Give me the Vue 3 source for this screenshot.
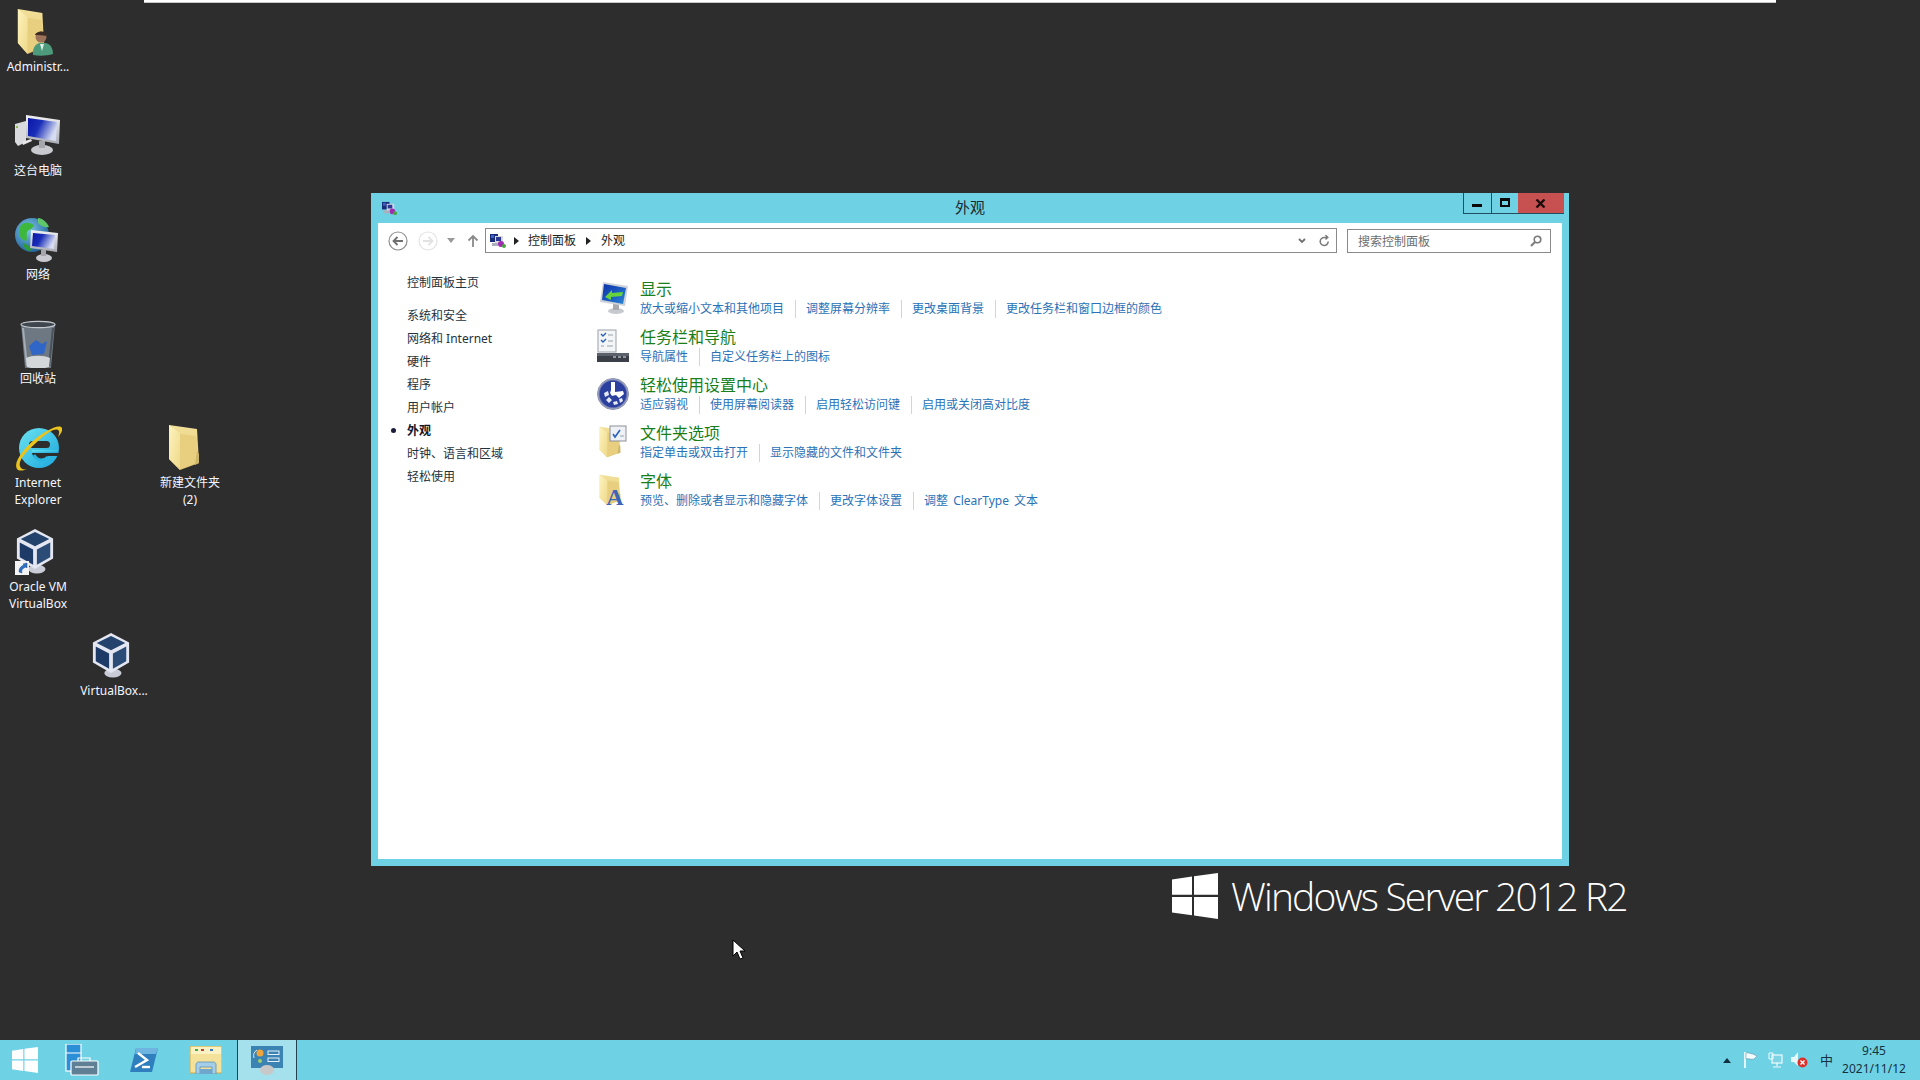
<script setup>
const desktopItems = [
  { id: 'admin', left: 0, top: 8, icon: 'i-admin', lines: ['Administr...'] },
  { id: 'pc', left: 0, top: 112, icon: 'i-pc', lines: ['这台电脑'] },
  { id: 'net', left: 0, top: 216, icon: 'i-net', lines: ['网络'] },
  { id: 'bin', left: 0, top: 320, icon: 'i-bin', lines: ['回收站'] },
  { id: 'ie', left: 0, top: 424, icon: 'i-ie', lines: ['Internet', 'Explorer'] },
  { id: 'folder', left: 152, top: 424, icon: 'i-newfolder', lines: ['新建文件夹', '(2)'] },
  { id: 'vbox', left: 0, top: 528, icon: 'i-vbox-short', lines: ['Oracle VM', 'VirtualBox'] },
  { id: 'vbox2', left: 76, top: 632, icon: 'i-vbox', lines: ['VirtualBox...'] }
]
const navItems = ['系统和安全', '网络和 Internet', '硬件', '程序', '用户帐户', '外观', '时钟、语言和区域', '轻松使用']
const sections = [
  { title: '显示', icon: 'c-display', links: ['放大或缩小文本和其他项目', '调整屏幕分辨率', '更改桌面背景', '更改任务栏和窗口边框的颜色'] },
  { title: '任务栏和导航', icon: 'c-taskbar', links: ['导航属性', '自定义任务栏上的图标'] },
  { title: '轻松使用设置中心', icon: 'c-ease', links: ['适应弱视', '使用屏幕阅读器', '启用轻松访问键', '启用或关闭高对比度'] },
  { title: '文件夹选项', icon: 'c-options', links: ['指定单击或双击打开', '显示隐藏的文件和文件夹'] },
  { title: '字体', icon: 'c-fonts', links: ['预览、删除或者显示和隐藏字体', '更改字体设置', '调整 ClearType 文本'] }
]
</script>

<template>
  <div class="screen">
    <svg class="defs" width="0" height="0" aria-hidden="true">
      <defs>
        <linearGradient id="gBack" x1="0" y1="0" x2="0" y2="1"><stop offset="0" stop-color="#f3e09a"/><stop offset="1" stop-color="#e2c56e"/></linearGradient>
        <linearGradient id="gFlap" x1="0" y1="0" x2="1" y2="1"><stop offset="0" stop-color="#fdf3bd"/><stop offset="1" stop-color="#efd98a"/></linearGradient>
        <linearGradient id="gScreen" x1="0" y1="0" x2="1" y2="0.4"><stop offset="0" stop-color="#0a14a8"/><stop offset=".45" stop-color="#1a2fb8"/><stop offset="1" stop-color="#d6dcf2"/></linearGradient>
        <linearGradient id="gSilver" x1="0" y1="0" x2="0" y2="1"><stop offset="0" stop-color="#f2f2f4"/><stop offset="1" stop-color="#a9acb4"/></linearGradient>
        <linearGradient id="gIe" x1="0" y1="0" x2="1" y2="1"><stop offset="0" stop-color="#6be4f2"/><stop offset="1" stop-color="#1ba6dc"/></linearGradient>
        <linearGradient id="gDisp" x1="0" y1="0" x2="1" y2="1"><stop offset="0" stop-color="#0c2fa8"/><stop offset="1" stop-color="#2a86d8"/></linearGradient>
        <radialGradient id="gGlobe" cx=".4" cy=".35" r=".7"><stop offset="0" stop-color="#7fc6e8"/><stop offset="1" stop-color="#1c5f98"/></radialGradient>
        <radialGradient id="gEase" cx=".5" cy=".5" r=".5"><stop offset="0" stop-color="#2e4ab4"/><stop offset=".8" stop-color="#1c2f8c"/><stop offset="1" stop-color="#c8cde0"/></radialGradient>
      </defs>
      <symbol id="s-folder" viewBox="0 0 32 47" preserveAspectRatio="none">
        <polygon points="1,1 29,5 31,39 12,46 1,35" fill="url(#gBack)"/>
        <polygon points="12,10 28,12 30,38 12,45" fill="#e8cf7f"/>
        <polygon points="29,27 31,30 31,39 27,41" fill="#cdb56a"/>
        <polygon points="1,1 12,9 12,46 1,35" fill="url(#gFlap)"/>
      </symbol>
      <symbol id="s-win" viewBox="0 0 46 46">
        <polygon points="0,6.5 20,3.6 20,21.8 0,21.8" fill="#fff"/>
        <polygon points="22,3.3 46,0 46,21.8 22,21.8" fill="#fff"/>
        <polygon points="0,24 20,24 20,42.3 0,39.5" fill="#fff"/>
        <polygon points="22,24 46,24 46,46 22,42.6" fill="#fff"/>
      </symbol>
      <symbol id="s-cube" viewBox="0 0 42 48">
        <ellipse cx="23" cy="43" rx="9" ry="4.5" fill="#c9ccd6"/>
        <polygon points="21,1 40,11 40,32 21,43 2,32 2,11" fill="#e4e7f2"/>
        <polygon points="21,4 36,11.500 21,19 6,11.500" fill="#23426c"/>
        <polygon points="5,15 19,22.500 19,38.500 5,30.500" fill="#1e3a66"/>
        <polygon points="23,22.500 37,15 37,30.500 23,38.500" fill="#2c4c78"/>
      </symbol>
      <symbol id="s-cpsmall" viewBox="0 0 16 16">
        <rect x="0" y="1" width="8" height="8" fill="#1b2d7a"/>
        <rect x="1" y="2" width="3" height="3" fill="#3f62c8"/>
        <rect x="5" y="3" width="8" height="9" fill="#d8d8e4"/>
        <rect x="6" y="4" width="5" height="4" fill="#2c3a92"/>
        <circle cx="11" cy="11" r="3" fill="#a02cb0"/>
        <circle cx="14" cy="13" r="2" fill="#46a83a"/>
        <rect x="2" y="10" width="6" height="3" fill="#aab0bc"/>
      </symbol>
      <symbol id="i-admin" viewBox="0 0 48 48">
        <use href="#s-folder" x="3" y="0" width="28" height="47"/>
        <path d="M19 47c-1-7 3-12 7-12h5c5 0 8 5 8 11-6 2-14 2-20 1z" fill="#4e9a7c"/>
        <circle cx="27" cy="29" r="5.500" fill="#9c7258"/>
        <path d="M21 27c1-4 10-5 12-1l-1 2c-3-1-7-1-11-1z" fill="#3a2c24"/>
        <path d="M26 36l2 7 2-7z" fill="#e0f0e6"/>
      </symbol>
      <symbol id="i-pc" viewBox="0 0 48 48">
        <polygon points="1,12 12,9 12,30 4,34 1,30" fill="#d8dade"/>
        <rect x="2" y="14" width="2" height="2" fill="#8dbb4e"/>
        <polygon points="12,3 46,8 45,32 12,26" fill="url(#gSilver)"/>
        <polygon points="14,6 43,10 42,29 14,24" fill="url(#gScreen)"/>
        <ellipse cx="28" cy="38" rx="11" ry="5" fill="#c8cad0"/>
        <rect x="25" y="29" width="6" height="7" fill="#a5a7ad"/>
        <polygon points="8,30 17,27 18,29 9,33" fill="#e8e8e8"/>
      </symbol>
      <symbol id="i-net" viewBox="0 0 48 48">
        <circle cx="18" cy="19" r="17" fill="url(#gGlobe)"/>
        <path d="M7 9c5-4 10-2 13 0-1 4-5 4-7 7-1 3 1 6-1 9-3 0-7-4-7-9 0-2 1-5 2-7z" fill="#3eb83c"/>
        <path d="M24 2c4 0 9 4 11 9-4 1-8-1-11-4z" fill="#5fc76a"/>
        <path d="M9 27c3 0 6 3 9 7l-3 1c-3-1-6-4-6-8z" fill="#2f9a3a"/>
        <polygon points="17,14 44,17 43,36 16,32" fill="url(#gSilver)"/>
        <polygon points="19,17 41,19 40,33 18,30" fill="url(#gScreen)"/>
        <ellipse cx="30" cy="42" rx="8" ry="4" fill="#c8cad0"/>
        <rect x="27" y="34" width="5" height="6" fill="#a5a7ad"/>
      </symbol>
      <symbol id="i-bin" viewBox="0 0 48 48">
        <path d="M7 4c4-3 30-3 34 0l-4 44c-6 2-20 2-26 0z" fill="#6d7882"/>
        <ellipse cx="24" cy="4.500" rx="17" ry="3.200" fill="#3f464e" stroke="#c4cad0" stroke-width="1.200"/>
        <path d="M9 8l4 38" stroke="#a3abb3" stroke-width="2"/>
        <path d="M39 8l-4 38" stroke="#4a525a" stroke-width="2"/>
        <path d="M15 26l7-6 6 4 5-3-3 13-12 1z" fill="#2f66c8"/>
        <path d="M12 38c6-3 18-3 24 0l-1 9c-6 2-16 2-22 0z" fill="#d4d7da"/>
      </symbol>
      <symbol id="i-ie" viewBox="0 0 48 48">
        <circle cx="25" cy="24" r="20" fill="url(#gIe)"/>
        <rect x="15" y="17" width="21" height="7" rx="3.500" fill="#2d2d2d"/>
        <path d="M46 29H18c1 4 4 7 8 7 3 0 6-1 8-4h12z" fill="#2d2d2d"/>
        <path d="M18 29h26v-3H18z" fill="url(#gIe)"/>
        <path d="M20 31c2 3 4 5 7 5 3 0 5-1 7-3" fill="none" stroke="#27b6e2" stroke-width="3"/>
        <path d="M3 45c-5-8 13-29 30-38 7-4 13-6 15-3 1 2-1 6-4 9 1-3 2-6 0-7-3-2-12 3-21 12C12 28 2 38 7 44c1 1 3 2 6 1-5 2-8 2-10 0z" fill="#ecc21c"/>
      </symbol>
      <symbol id="i-newfolder" viewBox="0 0 48 48">
        <use href="#s-folder" x="2" y="0" width="32" height="47"/>
      </symbol>
      <symbol id="i-vbox" viewBox="0 0 48 48">
        <use href="#s-cube" x="1" y="0" width="40" height="46"/>
      </symbol>
      <symbol id="i-vbox-short" viewBox="0 0 48 48">
        <use href="#s-cube" x="1" y="0" width="40" height="46"/>
        <rect x="1" y="33" width="14" height="14" fill="#f4f4f4"/>
        <path d="M5 44c0-4 2-6 5-7l-1-1 4-1v5l-1-1c-3 1-5 3-4 6z" fill="#2f6fc0" stroke="#1e4f96" stroke-width=".500"/>
      </symbol>
      <symbol id="c-display" viewBox="0 0 32 36">
        <ellipse cx="19" cy="31" rx="8" ry="3" fill="#c7c9ce"/>
        <rect x="16" y="24" width="6" height="6" fill="#a8aab0"/>
        <polygon points="6,2 31,6 28,26 3,22" fill="#cfd2d8"/>
        <polygon points="7,4 29,8 26,24 5,20" fill="url(#gDisp)"/>
        <path d="M8 17l7-7 0 3 11-1-1 4-11 1 0 3z" fill="#66d23c"/>
      </symbol>
      <symbol id="c-taskbar" viewBox="0 0 32 36">
        <rect x="1" y="2" width="18" height="22" fill="#f3f5f7" stroke="#9aa2aa"/>
        <path d="M4 6l2 2 3-3M4 12l2 2 3-3" fill="none" stroke="#2a62b0" stroke-width="1.400"/>
        <path d="M11 7h5M11 13h5M4 18h3M10 18h6" stroke="#9aa2aa"/>
        <rect x="0" y="25" width="32" height="9" fill="#3a3f48"/>
        <rect x="0" y="25" width="32" height="3" fill="#5c626c"/>
        <path d="M16 29h3M21 29h3M26 29h3" stroke="#aeb4bc" stroke-width="1.600"/>
      </symbol>
      <symbol id="c-ease" viewBox="0 0 32 36">
        <circle cx="16" cy="18" r="15.500" fill="url(#gEase)" stroke="#8b90a8"/>
        <circle cx="16" cy="18" r="13" fill="#2b3f9e"/>
        <path d="M14 6h4v10l8-1 1 3-5 4-3-3-4 1-2-3 1-3z" fill="#fff"/>
        <path d="M7 17l4-2 1 4-4 2zM9 24l3-3 3 3-3 3zM16 26l4-1 1 3-4 1zM22 23l3-1 1 3-3 2z" fill="#e6eaf6"/>
      </symbol>
      <symbol id="c-options" viewBox="0 0 32 36">
        <use href="#s-folder" x="2" y="2" width="22" height="32"/>
        <rect x="13" y="2" width="16" height="15" fill="#eef1f6" stroke="#8b8f96"/>
        <path d="M16 10l2 3 5-7" fill="none" stroke="#2a62c0" stroke-width="1.600"/>
        <path d="M23 12h4" stroke="#9aa0aa"/>
      </symbol>
      <symbol id="c-fonts" viewBox="0 0 32 36">
        <use href="#s-folder" x="2" y="2" width="22" height="32"/>
      </symbol>
    </svg>

    <main class="desktop">
      <div class="session-bar"></div>

      <div
        v-for="item in desktopItems"
        :key="item.id"
        class="desk-item"
        :style="{ left: item.left + 'px', top: item.top + 'px' }"
      >
        <svg class="desk-icon" viewBox="0 0 48 48"><use :href="'#' + item.icon"/></svg>
        <div class="desk-label">
          <div v-for="line in item.lines" :key="line">{{ line }}</div>
        </div>
      </div>

      <section class="window">
        <header class="titlebar">
          <svg class="title-icon"><use href="#s-cpsmall"/></svg>
          <div class="title-text">外观</div>
          <div class="win-buttons">
            <div class="win-btn win-min"><span class="min-glyph"></span></div>
            <div class="win-btn win-max"><span class="max-glyph"></span></div>
            <div class="win-btn win-close">
              <svg width="11" height="9" viewBox="0 0 11 9"><path d="M1.500 0.500l8 8M9.500 0.500l-8 8" stroke="#1a0d0d" stroke-width="2.400"/></svg>
            </div>
          </div>
        </header>

        <div class="win-body">
          <div class="toolbar">
            <svg class="tb-back" width="20" height="20" viewBox="0 0 20 20">
              <circle cx="10" cy="10" r="9" fill="#fff" stroke="#8f8f8f" stroke-width="1.200"/>
              <path d="M15 10H6M9.500 6l-4 4 4 4" fill="none" stroke="#6f6f6f" stroke-width="1.800"/>
            </svg>
            <svg class="tb-forward" width="20" height="20" viewBox="0 0 20 20">
              <circle cx="10" cy="10" r="9" fill="#fff" stroke="#e4e4e4" stroke-width="1.200"/>
              <path d="M5 10h9M10.500 6l4 4-4 4" fill="none" stroke="#e2e2e2" stroke-width="1.800"/>
            </svg>
            <svg class="tb-drop" width="8" height="5" viewBox="0 0 8 5"><path d="M0 0h8L4 5z" fill="#9a9a9a"/></svg>
            <svg class="tb-up" width="14" height="14" viewBox="0 0 14 14"><path d="M7 13V2M2.500 6.500L7 2l4.500 4.500" fill="none" stroke="#8a8a8a" stroke-width="1.800"/></svg>

            <div class="address">
              <svg class="addr-icon"><use href="#s-cpsmall"/></svg>
              <svg class="crumb-arrow" width="5" height="8" viewBox="0 0 5 8"><path d="M0 0l5 4-5 4z" fill="#222"/></svg>
              <span class="crumb">控制面板</span>
              <svg class="crumb-arrow second" width="5" height="8" viewBox="0 0 5 8"><path d="M0 0l5 4-5 4z" fill="#222"/></svg>
              <span class="crumb second">外观</span>
              <svg class="addr-chev" width="8" height="6" viewBox="0 0 8 6"><path d="M1 1l3 3 3-3" fill="none" stroke="#707070" stroke-width="1.800"/></svg>
              <svg class="addr-refresh" width="11" height="12" viewBox="0 0 11 12"><path d="M9.200 6.500A4 4 0 1 1 5.500 2.500H8M6.500 0l2.300 2.500-2.300 2" fill="none" stroke="#7a7a7a" stroke-width="1.500"/></svg>
            </div>

            <div class="search">
              <span class="search-text">搜索控制面板</span>
              <svg width="12" height="12" viewBox="0 0 12 12"><circle cx="7.500" cy="4.500" r="3.300" fill="none" stroke="#7a7a7a" stroke-width="1.600"/><path d="M5 7l-4 4" stroke="#7a7a7a" stroke-width="2"/></svg>
            </div>
          </div>

          <div class="content">
            <nav class="sidebar">
              <div class="nav-home">控制面板主页</div>
              <div
                v-for="n in navItems"
                :key="n"
                class="nav-item"
                :class="{ current: n === '外观' }"
              >{{ n }}</div>
            </nav>
            <div class="sections">
              <article v-for="s in sections" :key="s.title" class="section">
                <svg class="section-icon" viewBox="0 0 32 42">
                  <use :href="'#' + s.icon" width="32" height="36"/>
                  <text v-if="s.icon === 'c-fonts'" x="18" y="33" text-anchor="middle" class="font-a">A</text>
                </svg>
                <div>
                  <h2 class="section-title">{{ s.title }}</h2>
                  <div class="links">
                    <span v-for="l in s.links" :key="l" class="link">{{ l }}</span>
                  </div>
                </div>
              </article>
            </div>
          </div>
        </div>
      </section>

      <div class="watermark">
        <svg class="wm-logo"><use href="#s-win"/></svg>
        <span class="wm-text">Windows Server 2012 R2</span>
      </div>

      <svg class="cursor" width="14" height="22" viewBox="0 0 14 22">
        <path d="M1 1v16l4-4 3 7 3-1-3-7h5z" fill="#fff" stroke="#000" stroke-width="1"/>
      </svg>
    </main>

    <footer class="taskbar">
      <div class="task-btn task-start">
        <svg width="26" height="26"><use href="#s-win"/></svg>
      </div>
      <div class="task-btn">
        <svg width="34" height="32" viewBox="0 0 34 32">
          <rect x="1" y="0" width="15" height="27" fill="#2a8fd6" stroke="#fff" stroke-width="1.200"/>
          <path d="M1 9h15" stroke="#fff"/>
          <rect x="6" y="17" width="27" height="14" rx="1" fill="#5f7f95" stroke="#fff" stroke-width="1.200"/>
          <path d="M13 17v-3h12v3" fill="none" stroke="#fff" stroke-width="1.200"/>
          <path d="M10 23h19" stroke="#fff" stroke-width="1.200"/>
        </svg>
      </div>
      <div class="task-btn">
        <svg width="28" height="24" viewBox="0 0 28 24">
          <polygon points="6,0 28,0 22,24 0,24" fill="#2f7fbe"/>
          <polygon points="6,0 28,0 26,6 5,6" fill="#6db4e0"/>
          <path d="M8 5l9 7-12 7" fill="none" stroke="#fff" stroke-width="2.400"/>
          <path d="M12 19h8" stroke="#fff" stroke-width="2.400"/>
        </svg>
      </div>
      <div class="task-btn">
        <svg width="32" height="28" viewBox="0 0 32 28">
          <rect x="0" y="0" width="32" height="27" fill="#f5e29a" stroke="#c9ab55"/>
          <rect x="1" y="1" width="30" height="7" fill="#fbf2c4"/>
          <path d="M5 4h3" stroke="#4aa84a" stroke-width="2"/><path d="M11 4h3" stroke="#c04040" stroke-width="2"/><path d="M20 4h3" stroke="#3a78c0" stroke-width="2"/>
          <path d="M6 28V19c0-2 1-3 3-3h14c2 0 3 1 3 3v9h-4v-7H10v7z" fill="#a5cfe9" stroke="#5a8fb5" stroke-width=".800"/>
          <rect x="10" y="23" width="12" height="5" fill="#6ea6cc"/>
        </svg>
      </div>
      <div class="task-btn task-active">
        <svg width="32" height="29" viewBox="0 0 32 29">
          <rect x="0" y="0" width="32" height="22" fill="#3b83b3"/>
          <circle cx="9" cy="7" r="3.500" fill="#f0a53a"/>
          <circle cx="9" cy="15" r="2" fill="#9fd06a"/>
          <path d="M3 12a7 7 0 0 1 3-8" fill="none" stroke="#dbeaf3"/>
          <rect x="17" y="5" width="11" height="3.500" fill="none" stroke="#e4f0f7"/>
          <rect x="17" y="12" width="11" height="3.500" fill="none" stroke="#e4f0f7"/>
          <ellipse cx="16" cy="24" rx="7" ry="5" fill="#c8c8c8"/>
        </svg>
      </div>

      <div class="tray">
        <svg class="tray-arrow" width="8" height="5" viewBox="0 0 8 5"><path d="M4 0l4 5H0z" fill="#12303f"/></svg>
        <svg class="tray-flag" width="14" height="16" viewBox="0 0 14 16">
          <path d="M1 0v16" stroke="#fff" stroke-width="1.600"/>
          <path d="M2 1c3-1 4 1 7 1l4 2-3 3c-3 1-5-1-8 0z" fill="#f2fbfd" stroke="#5a8a9a" stroke-width=".500"/>
        </svg>
        <svg class="tray-net" width="15" height="16" viewBox="0 0 15 16">
          <rect x="4" y="3" width="10" height="8" fill="#7fd4e4" stroke="#f0fafc" stroke-width="1.200"/>
          <path d="M1 1h4v6H1z" fill="none" stroke="#f0fafc"/>
          <path d="M9 11v3M5 15h8" stroke="#f0fafc" stroke-width="1.200"/>
        </svg>
        <svg class="tray-vol" width="17" height="16" viewBox="0 0 17 16">
          <path d="M0 5h3l4-5v14l-4-4H0z" fill="#e8f6fa"/>
          <circle cx="11.500" cy="10.500" r="5" fill="#d9322c"/>
          <path d="M9.500 8.500l4 4M13.500 8.500l-4 4" stroke="#fff" stroke-width="1.300"/>
        </svg>
        <span class="tray-ime">中</span>
        <div class="clock">
          <div>9:45</div>
          <div>2021/11/12</div>
        </div>
      </div>
    </footer>
  </div>
</template>

<style scoped>
.screen {
  width: 1920px;
  height: 1080px;
  display: flex;
  flex-direction: column;
  overflow: hidden;
  font-family: "Noto Sans", "Noto Sans CJK SC", sans-serif;
  font-size: 12px;
}
.defs { position: absolute; }
.desktop {
  position: relative;
  flex: 1;
  background: #2d2d2d;
}
.session-bar {
  position: absolute;
  left: 144px;
  top: 0;
  width: 1632px;
  height: 2px;
  background: #fff;
  border-bottom: 1px solid #c8c8c8;
}
.desk-item {
  position: absolute;
  width: 76px;
  display: flex;
  flex-direction: column;
  align-items: center;
}
.desk-icon { width: 48px; height: 48px; }
.desk-label {
  margin-top: 2px;
  width: 100%;
  color: #f4f6ff;
  line-height: 17px;
  text-align: center;
  white-space: nowrap;
}
.window {
  position: absolute;
  left: 371px;
  top: 193px;
  width: 1198px;
  height: 673px;
  background: #6ed1e4;
  display: flex;
  flex-direction: column;
}
.titlebar {
  height: 30px;
  display: grid;
  grid-template-columns: 1fr auto 1fr;
  align-items: center;
}
.title-icon {
  width: 15px;
  height: 15px;
  margin-left: 11px;
}
.title-text {
  font-size: 15px;
  color: #1a2a30;
  margin-top: -4px;
}
.win-buttons {
  justify-self: end;
  align-self: start;
  display: flex;
  margin-right: 5px;
}
.win-btn {
  height: 21px;
  display: flex;
  align-items: center;
  justify-content: center;
  border-bottom: 1px solid #1f4f60;
  box-sizing: border-box;
}
.win-min { width: 28px; border-left: 1px solid #1f4f60; }
.win-max { width: 27px; border-left: 1px solid #1f4f60; }
.win-close { width: 46px; background: #c75050; padding-right: 2px; }
.min-glyph { width: 10px; height: 3px; background: #0a0a0a; margin-top: 4px; margin-right: 2px; }
.max-glyph { width: 10px; height: 9px; border: 2px solid #0a0a0a; border-top-width: 3px; box-sizing: border-box; margin-top: -2px; }
.win-body {
  flex: 1;
  margin: 0 7px 7px;
  background: #fff;
  display: flex;
  flex-direction: column;
}
.toolbar {
  display: flex;
  align-items: center;
  padding: 5px 11px 0 10px;
}
.tb-forward { margin-left: 10px; }
.tb-drop { margin-left: 9px; }
.tb-up { margin-left: 11px; }
.address {
  margin-left: 5px;
  flex: 1;
  height: 25px;
  box-sizing: border-box;
  border: 1px solid #8a8a8a;
  display: flex;
  align-items: center;
  padding-left: 4px;
  color: #222;
}
.addr-icon { width: 16px; height: 16px; }
.crumb-arrow { margin-left: 8px; }
.crumb-arrow.second { margin-left: 10px; }
.crumb { margin-left: 9px; line-height: 20px; }
.crumb.second { margin-left: 10px; }
.addr-chev { margin-left: auto; }
.addr-refresh { margin: 0 6px 0 13px; }
.search {
  margin-left: 10px;
  width: 204px;
  height: 24px;
  align-self: flex-end;
  box-sizing: border-box;
  border: 1px solid #8a8a8a;
  display: flex;
  align-items: center;
  justify-content: space-between;
  padding: 0 8px 0 10px;
  color: #6d6d6d;
}
.content {
  flex: 1;
  display: flex;
}
.sidebar {
  width: 219px;
  box-sizing: border-box;
  padding: 17.500px 0 0 29px;
  color: #24323c;
  line-height: 23px;
}
.nav-home { margin-bottom: 10px; }
.nav-item { position: relative; }
.nav-item.current { font-weight: 700; color: #14142a; }
.nav-item.current::before {
  content: "";
  position: absolute;
  left: -16px;
  top: 9px;
  width: 5px;
  height: 5px;
  border-radius: 50%;
  background: #1c1c3a;
}
.sections { padding-top: 27px; }
.section {
  display: flex;
  gap: 11px;
  height: 48px;
}
.section-icon { width: 32px; height: 42px; flex: none; }
.section-title {
  margin: 0 0 2px;
  font-size: 16px;
  font-weight: 400;
  line-height: 18px;
  color: #1a7f1a;
}
.links {
  display: flex;
  line-height: 18px;
  color: #2a72b8;
}
.link {
  padding: 0 11px 0 10px;
  border-left: 1px solid #d4d4d4;
  white-space: nowrap;
  word-spacing: 2px;
}
.link:first-child { padding-left: 0; border-left: none; }
.watermark {
  position: absolute;
  left: 1172px;
  top: 872px;
  display: flex;
  align-items: center;
  gap: 13px;
  color: #fff;
}
.wm-logo { width: 46px; height: 46px; margin-top: 1px; }
.wm-text {
  font-family: "Open Sans", sans-serif;
  font-weight: 300;
  font-size: 39px;
  line-height: 44px;
  letter-spacing: -1.850px;
  white-space: nowrap;
}
.font-a {
  font-family: "Liberation Serif", serif;
  font-weight: 700;
  font-size: 24px;
  fill: #3c64b8;
}
.cursor {
  position: absolute;
  left: 732px;
  top: 939px;
}
.taskbar {
  height: 40px;
  background: #6ed1e4;
  display: flex;
  align-items: center;
  flex: none;
}
.task-btn {
  width: 62px;
  height: 40px;
  display: flex;
  align-items: center;
  justify-content: center;
  box-sizing: border-box;
}
.task-start { width: 51px; padding-right: 2px; }
.task-active {
  width: 60px;
  background: #a4e1ed;
  border-left: 1px solid #23404c;
  border-right: 1px solid #23404c;
}
.tray {
  margin-left: auto;
  display: flex;
  align-items: center;
  color: #14323f;
  padding-right: 13px;
}
.tray-flag { margin-left: 13px; }
.tray-net { margin-left: 10px; }
.tray-vol { margin-left: 8px; }
.tray-ime { margin-left: 12px; font-size: 13px; line-height: 16px; }
.clock {
  margin-left: 8px;
  width: 66px;
  text-align: center;
  line-height: 18px;
  white-space: nowrap;
}
</style>

<style>
body { background: #2d2d2d; }
</style>
